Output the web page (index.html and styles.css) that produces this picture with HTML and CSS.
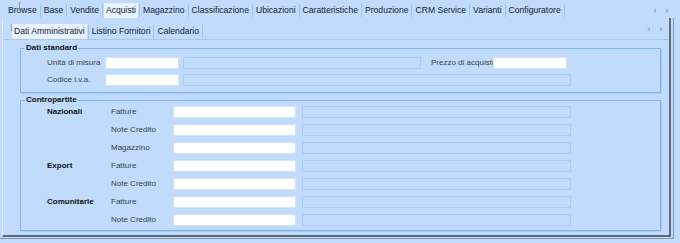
FILE: index.html
```html
<!DOCTYPE html>
<html lang="it">
<head>
    <meta charset="UTF-8">
    <title>Articoli - Acquisti</title>
    <link rel="stylesheet" href="styles.css">
</head>
<body>
    <!-- Schede principali -->
    <div class="tabs top-tabs">
        <span class="tab">Browse</span><span class="sep"></span>
        <span class="tab">Base</span><span class="sep"></span>
        <span class="tab">Vendite</span><span class="sep"></span>
        <span class="tab active">Acquisti</span><span class="sep"></span>
        <span class="tab">Magazzino</span><span class="sep"></span>
        <span class="tab">Classificazione</span><span class="sep"></span>
        <span class="tab">Ubicazioni</span><span class="sep"></span>
        <span class="tab">Caratteristiche</span><span class="sep"></span>
        <span class="tab">Produzione</span><span class="sep"></span>
        <span class="tab">CRM Service</span><span class="sep"></span>
        <span class="tab">Varianti</span><span class="sep"></span>
        <span class="tab">Configuratore</span><span class="sep"></span>
        <span class="arrows">
            <svg width="3" height="5" viewBox="0 0 3 5"><path d="M3 0 L0 2.5 L3 5 Z" fill="#a9b5c4"/></svg>
            <svg width="3" height="5" viewBox="0 0 3 5"><path d="M0 0 L3 2.5 L0 5 Z" fill="#a9b5c4"/></svg>
        </span>
        <span class="caret first"></span>
    </div>

    <div class="frame">
        <div class="panel">
            <!-- Schede secondarie -->
            <div class="tabs sub-tabs">
                <span class="tab active">Dati Amministrativi</span><span class="sep"></span>
                <span class="tab">Listino Fornitori</span><span class="sep"></span>
                <span class="tab">Calendario</span><span class="sep"></span>
                <span class="arrows">
                    <svg width="3" height="5" viewBox="0 0 3 5"><path d="M3 0 L0 2.5 L3 5 Z" fill="#a9b5c4"/></svg>
                    <svg width="3" height="5" viewBox="0 0 3 5"><path d="M0 0 L3 2.5 L0 5 Z" fill="#a9b5c4"/></svg>
                </span>
                <span class="caret second"></span>
            </div>

            <!-- Dati standard -->
            <fieldset class="group std">
                <legend>Dati standard</legend>
                <div class="group-body">
                    <div class="row">
                        <span class="lbl">Unità di misura</span>
                        <span class="field short"></span>
                        <span class="field off w238"></span>
                        <span class="lbl clip">Prezzo di acquisto</span>
                        <span class="field short"></span>
                    </div>
                    <div class="row">
                        <span class="lbl">Codice i.v.a.</span>
                        <span class="field short"></span>
                        <span class="field off w388"></span>
                    </div>
                </div>
            </fieldset>

            <!-- Contropartite -->
            <fieldset class="group contro">
                <legend>Contropartite</legend>
                <div class="group-body grid">
                    <span class="head">Nazionali</span><span class="lbl">Fatture</span><span class="field"></span><span class="field off"></span>
                    <span></span><span class="lbl">Note Credito</span><span class="field"></span><span class="field off"></span>
                    <span></span><span class="lbl">Magazzino</span><span class="field"></span><span class="field off"></span>
                    <span class="head">Export</span><span class="lbl">Fatture</span><span class="field"></span><span class="field off"></span>
                    <span></span><span class="lbl">Note Credito</span><span class="field"></span><span class="field off"></span>
                    <span class="head">Comunitarie</span><span class="lbl">Fatture</span><span class="field"></span><span class="field off"></span>
                    <span></span><span class="lbl">Note Credito</span><span class="field"></span><span class="field off"></span>
                </div>
            </fieldset>
        </div>
    </div>
</body>
</html>
```

FILE: styles.css
```css
* {
    margin: 0;
    padding: 0;
    box-sizing: border-box;
}

body {
    width: 680px;
    height: 243px;
    background: #c0dbfc;
    font-family: 'Liberation Sans', Arial, sans-serif;
    color: #1d2733;
    overflow: hidden;
}

/* Schede */
.tabs {
    position: relative;
    display: flex;
    align-items: flex-end;
}

.top-tabs {
    height: 18px;
    padding-left: 6px;
    padding-right: 11px;
}

.sub-tabs {
    height: 22px;
    padding-left: 9px;
    padding-right: 6px;
    border-bottom: 1px solid #a7c6ec;
}

.tab {
    height: 15px;
    line-height: 15px;
    padding: 0 2px;
    font-size: 8.6px;
    color: #17212c;
    white-space: nowrap;
}

.tab.active {
    background: #e9f3ff;
}

.sep {
    width: 1px;
    height: 13px;
    margin: 0 1px 1px 1px;
    background: #a3c1e4;
}

.arrows {
    display: flex;
    gap: 10px;
    margin-left: auto;
    align-self: center;
    margin-top: 2px;
}

.arrows svg {
    display: block;
}

.caret {
    position: absolute;
    width: 1px;
    background: #8e98a4;
}

.caret.first {
    left: 19px;
    top: 2px;
    height: 8px;
}

.caret.second {
    left: 8px;
    top: 6px;
    height: 7px;
}

/* Riquadro */
.frame {
    width: 674px;
    padding-right: 2px;
    padding-bottom: 1px;
    border-right: 1px solid #8c97a4;
    border-bottom: 1px solid #8c97a4;
}

.panel {
    width: 669px;
    height: 219px;
    margin-left: 2px;
    border-left: 1px solid #e4eefa;
    border-right: 2px solid #5f6a77;
    border-bottom: 2px solid #5f6a77;
}

/* Gruppi */
.group {
    width: 641px;
    margin-left: 17px;
    padding: 0;
    border: 1px solid #7fb2f3;
    box-shadow: 1px 1px 0 #a6ccf8;
}

.group legend {
    margin-left: 4px;
    padding: 0 1px;
    font-size: 8px;
    line-height: 10px;
    font-weight: bold;
    color: #111;
}

.std {
    margin-top: 3px;
}

.std .group-body {
    padding: 4px 0 6px 26px;
}

.contro {
    margin-top: 2px;
}

.contro .group-body {
    padding: 1px 0 4px 26px;
}

.row {
    display: flex;
    align-items: center;
    height: 12px;
}

.row + .row {
    margin-top: 5px;
}

.lbl {
    font-size: 8px;
    line-height: 12px;
    color: #3a3f46;
    white-space: nowrap;
}

.row .lbl {
    width: 58px;
}

.row .lbl.clip {
    width: 62px;
    margin-left: 10px;
    overflow: hidden;
}

.field {
    display: block;
    height: 12px;
    background: #fff;
    border: 1px solid #d3e2f3;
}

.field.short {
    width: 74px;
}

.field.off {
    background: #c0dbfc;
    border: 1px solid #adc9ed;
}

.row .field.off {
    margin-left: 4px;
}

.w238 {
    width: 238px;
}

.w388 {
    width: 388px;
}

.grid {
    display: grid;
    grid-template-columns: 64px 62px 123px 275px;
    grid-auto-rows: 12px;
    row-gap: 6px;
}

.grid .field.off {
    margin-left: 6px;
}

.head {
    font-size: 8px;
    line-height: 12px;
    font-weight: bold;
    color: #111;
}
```
